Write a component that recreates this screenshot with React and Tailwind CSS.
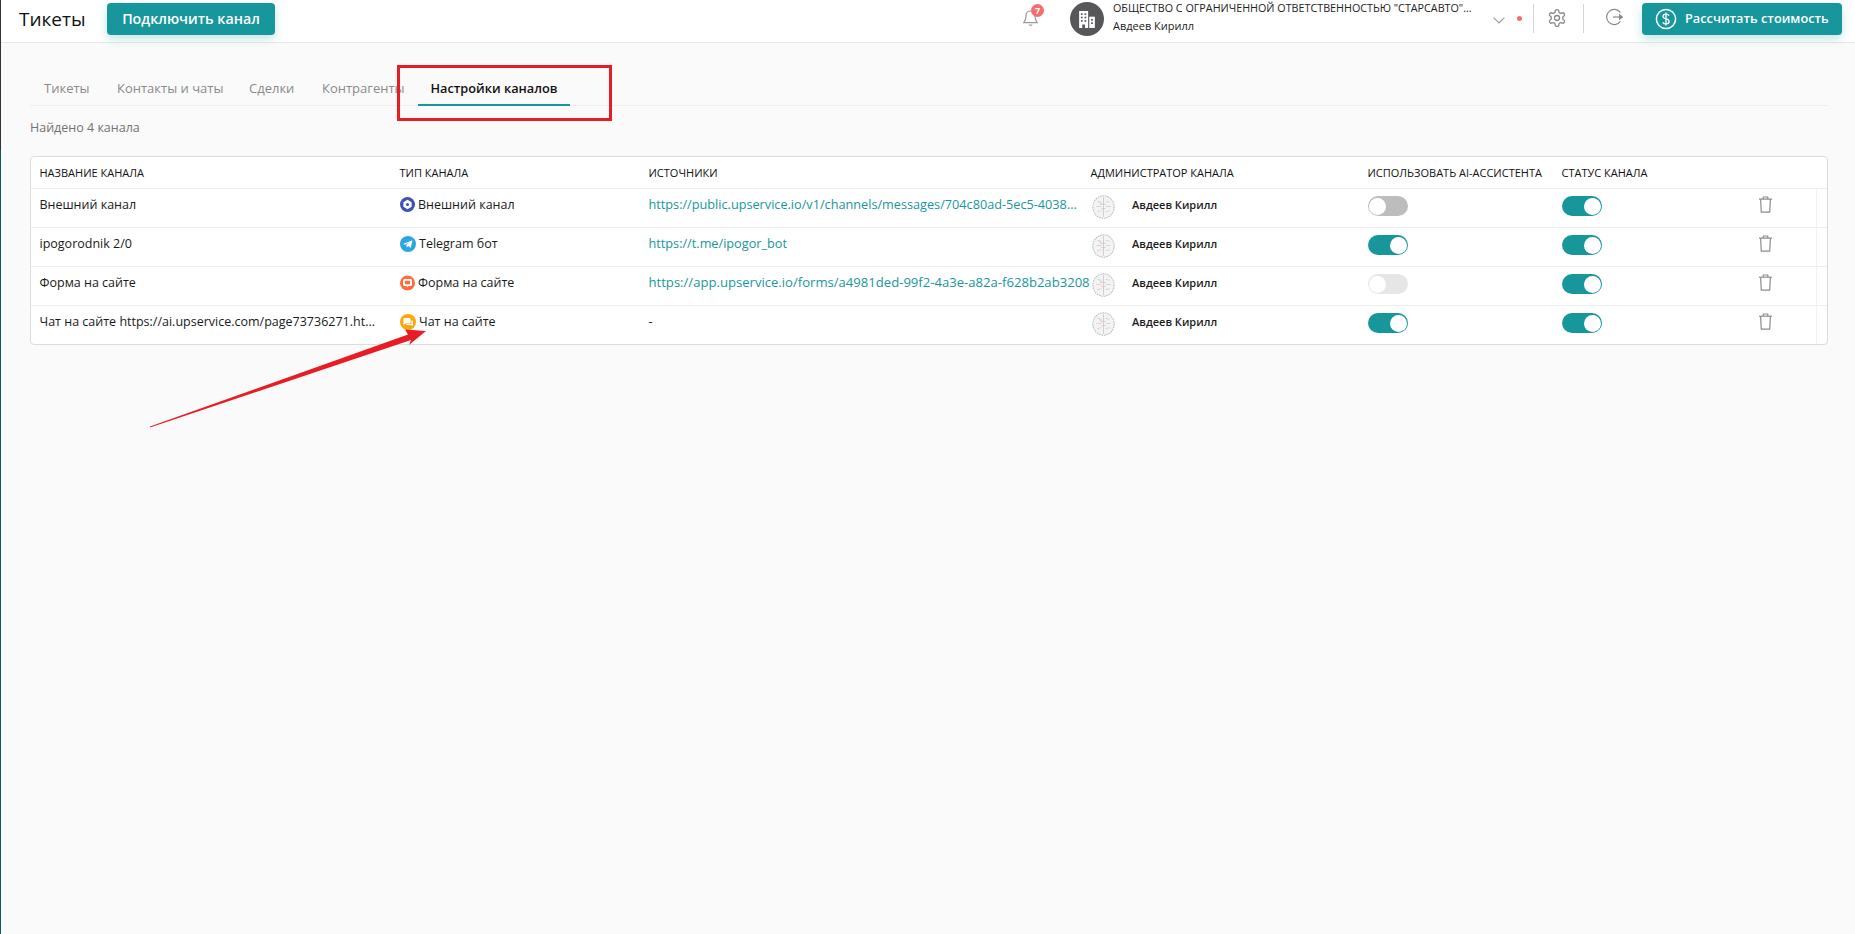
const rows = [
  { name: 'Внешний канал', type: 'Внешний канал', icon: 'ext', src: 'https://public.upservice.io/v1/channels/messages/704c80ad-5ec5-4038...', srcSize: 'text-[12.7px]', ai: 'off' },
  { name: 'ipogorodnik 2/0', type: 'Telegram бот', icon: 'tg', src: 'https://t.me/ipogor_bot', srcSize: 'text-[12.7px]', ai: 'on' },
  { name: 'Форма на сайте', type: 'Форма на сайте', icon: 'form', src: 'https://app.upservice.io/forms/a4981ded-99f2-4a3e-a82a-f628b2ab3208', srcSize: 'text-[13.1px]', ai: 'disabled' },
  { name: 'Чат на сайте https://ai.upservice.com/page73736271.ht...', type: 'Чат на сайте', icon: 'chat', src: '-', srcSize: 'text-[12.7px]', ai: 'on' },
];

const grid = 'grid grid-cols-[360px_249px_442px_277px_194px_1fr]';

function TypeIcon({ kind }) {
  if (kind === 'ext') return (
    <svg width="15" height="15" viewBox="0 0 16 16" className="shrink-0">
      <circle cx="8" cy="8" r="8" fill="#3f51b5" />
      <path d="M8 3l4.4 2.5v5L8 13l-4.4-2.5v-5z" fill="#fff" />
      <circle cx="8" cy="8" r="1.6" fill="#3f51b5" />
    </svg>
  );
  if (kind === 'tg') return (
    <svg width="16" height="16" viewBox="0 0 16 16" className="shrink-0">
      <circle cx="8" cy="8" r="8" fill="#2ca5e0" />
      <path d="M3 7.9l9.4-3.7-1.6 7.9-2.7-2-1.4 1.4-.3-2.4 4.2-3.6-5.3 3.2z" fill="#fff" />
    </svg>
  );
  if (kind === 'form') return (
    <svg width="15" height="16" viewBox="0 0 16 16" className="shrink-0">
      <circle cx="8" cy="8" r="8" fill="#ff6b3d" />
      <rect x="3.2" y="3.8" width="9.6" height="7.4" rx="1.6" fill="#fff" />
      <rect x="5.2" y="5.6" width="5.6" height="3.6" rx="0.8" fill="#ff6b3d" />
      <path d="M6.5 11h3l-1.5 1.6z" fill="#fff" />
    </svg>
  );
  return (
    <svg width="16" height="16" viewBox="0 0 16 16" className="shrink-0">
      <circle cx="8" cy="8" r="8" fill="#ffa50a" />
      <path d="M3.4 5a1 1 0 011-1h5.2a1 1 0 011 1v3.4a1 1 0 01-1 1H5.6L3.4 11z" fill="#fff" />
      <path d="M11.4 6.4h.6a.9.9 0 01.9.9v5l-1.8-1.4H6.5v-.8h3.4a1.5 1.5 0 001.5-1.5z" fill="#fff" />
    </svg>
  );
}

function Toggle({ state }) {
  const on = state === 'on';
  const track = on ? 'bg-[#17979c] justify-end' : state === 'off' ? 'bg-[#bdbdbd] justify-start' : 'bg-[#e6e6e6] justify-start';
  return (
    <div className={`flex h-5 w-10 items-center rounded-full px-[1px] ${track}`}>
      <div className="h-[17px] w-[17px] rounded-full bg-white" />
    </div>
  );
}

function BrainAvatar() {
  return (
    <svg width="23" height="24" viewBox="0 0 22 23" className="shrink-0">
      <ellipse cx="11" cy="11.5" rx="10.2" ry="10.8" fill="#f4f4f4" stroke="#bcbcbc" strokeWidth="1" strokeDasharray="1.6 0.8" />
      <path d="M11 2v19" stroke="#c9c9c9" strokeWidth="0.8" />
      <path d="M5 6l4 1M4 11h5M5 16l4-1M13 6l4 1M13 11h5M13 16l4-1" stroke="#cfcfcf" strokeWidth="0.8" />
      <path d="M8 9h5M9 13h4" stroke="#f0b8b8" strokeWidth="0.8" />
      <path d="M7 7.5l2 .5" stroke="#a9cde6" strokeWidth="0.8" />
    </svg>
  );
}

function Trash() {
  return (
    <svg width="15" height="17" viewBox="0 0 15 17" fill="none" stroke="#8c8c8c" strokeWidth="1.2" strokeLinejoin="round">
      <path d="M1 3.2h13" />
      <path d="M5.2 3V1h4.6v2" />
      <path d="M2.6 3.4l.7 12.8h8.4l.7-12.8" />
    </svg>
  );
}

export default function App() {
  return (
    <div className="relative flex h-[934px] w-[1855px] overflow-hidden bg-[#fafafa] font-['Open_Sans',sans-serif] text-[12.5px] text-[#1a1a1a]">
      <div className="w-px shrink-0 bg-[linear-gradient(#333_0,#333_150px,#0d5c5e_150px,#0d5c5e_100%)]" />
      <div className="min-w-0 flex-1">
        <header className="flex h-[43px] items-start border-b border-[#e8e8e8] bg-white pt-[3px]">
          <div className="ml-[18px] w-[88px] pt-[2px] text-[19px] font-medium leading-[28px] text-[#111]">Тикеты</div>
          <button className="flex h-8 w-[168px] items-center justify-center rounded bg-[#17979c] text-[14.25px] font-semibold text-white shadow-[0_4px_10px_rgba(23,151,156,0.25)]">Подключить канал</button>

          <div className="relative ml-[747px] mt-[6px] w-[48px]">
            <svg width="15" height="18" viewBox="0 0 15 18" fill="none" stroke="#9a9a9a" strokeWidth="1.2" className="ml-[1px]">
              <path d="M7.5 2a4.4 4.4 0 00-4.4 4.4c0 4.6-1.6 6.4-2.3 7.2h13.4c-.7-.8-2.3-2.6-2.3-7.2A4.4 4.4 0 007.5 2z" />
              <path d="M6 15.4a1.6 1.6 0 003 0" />
            </svg>
            <span className="absolute left-[9px] top-[-5px] flex h-[13px] w-[13px] items-center justify-center rounded-full bg-[#f76c6c] text-[9px] font-bold leading-none text-white">7</span>
          </div>

          <div className="mt-[-1px] flex h-[34px] w-[34px] shrink-0 items-center justify-center rounded-full bg-[#57575a]">
            <svg width="18" height="17" viewBox="0 0 16 15" fill="#fff">
              <path d="M1 0h8v15H6.2v-3H3.8v3H1z" />
              <path d="M10 5h5v10h-5z" />
              <g fill="#57575a">
                <rect x="2.6" y="2" width="1.5" height="1.5" /><rect x="5.8" y="2" width="1.5" height="1.5" />
                <rect x="2.6" y="5" width="1.5" height="1.5" /><rect x="5.8" y="5" width="1.5" height="1.5" />
                <rect x="2.6" y="8" width="1.5" height="1.5" /><rect x="5.8" y="8" width="1.5" height="1.5" />
                <rect x="11.6" y="7" width="1.6" height="1.5" /><rect x="11.6" y="10" width="1.6" height="1.5" />
              </g>
            </svg>
          </div>

          <div className="ml-[9px] w-[379px] text-[#222]">
            <div className="mt-[-3px] text-[10.75px] leading-[16px] whitespace-nowrap">ОБЩЕСТВО С ОГРАНИЧЕННОЙ ОТВЕТСТВЕННОСТЬЮ "СТАРСАВТО"...</div>
            <div className="mt-[2px] text-[11px] leading-[16px]">Авдеев Кирилл</div>
          </div>

          <svg width="12" height="7" viewBox="0 0 12 7" fill="none" stroke="#9a9a9a" strokeWidth="1.1" className="ml-[1px] mt-[14px]">
            <path d="M.6.6L6 6l5.4-5.4" />
          </svg>
          <span className="ml-[12px] mt-[13px] h-[5px] w-[5px] rounded-full bg-[#f76c6c]" />
          <span className="ml-[11px] mt-[1px] h-[29px] w-px bg-[#d5d5d5]" />

          <svg width="20" height="20" viewBox="0 0 24 24" fill="none" stroke="#8a8a8a" strokeWidth="1.6" strokeLinecap="round" strokeLinejoin="round" className="ml-[13px] mt-[5px]">
            <path d="M12.22 2h-.44a2 2 0 0 0-2 2v.18a2 2 0 0 1-1 1.73l-.43.25a2 2 0 0 1-2 0l-.15-.08a2 2 0 0 0-2.73.73l-.22.38a2 2 0 0 0 .73 2.73l.15.1a2 2 0 0 1 1 1.72v.51a2 2 0 0 1-1 1.74l-.15.09a2 2 0 0 0-.73 2.73l.22.38a2 2 0 0 0 2.73.73l.15-.08a2 2 0 0 1 2 0l.43.25a2 2 0 0 1 1 1.73V20a2 2 0 0 0 2 2h.44a2 2 0 0 0 2-2v-.18a2 2 0 0 1 1-1.73l.43-.25a2 2 0 0 1 2 0l.15.08a2 2 0 0 0 2.73-.73l.22-.39a2 2 0 0 0-.73-2.73l-.15-.08a2 2 0 0 1-1-1.74v-.5a2 2 0 0 1 1-1.74l.15-.09a2 2 0 0 0 .73-2.73l-.22-.38a2 2 0 0 0-2.73-.73l-.15.08a2 2 0 0 1-2 0l-.43-.25a2 2 0 0 1-1-1.73V4a2 2 0 0 0-2-2z" />
            <circle cx="12" cy="12" r="3" />
          </svg>
          <span className="ml-[16px] mt-[1px] h-[29px] w-px bg-[#d5d5d5]" />

          <svg width="18" height="18" viewBox="0 0 18 18" fill="none" stroke="#8a8a8a" strokeWidth="1.2" className="ml-[21px] mt-[5px]">
            <path d="M15.4 4.6A7.6 7.6 0 1 0 15.4 13.4" />
            <path d="M8 9h9.2" />
            <path d="M14.6 7l2.6 2-2.6 2z" fill="#8a8a8a" />
          </svg>

          <button className="ml-[19px] flex h-8 w-[200px] items-center whitespace-nowrap rounded bg-[#17979c] pl-[13px] text-[12.75px] font-semibold text-white shadow-[0_4px_10px_rgba(23,151,156,0.25)]">
            <svg width="22" height="22" viewBox="0 0 22 22" fill="none" stroke="#fff" strokeWidth="1.5" className="mr-[8px] shrink-0">
              <circle cx="11" cy="11" r="9.6" />
              <path d="M14 7.6c-.6-1-1.7-1.5-3-1.5-1.7 0-3 .9-3 2.4 0 3.2 6.2 1.7 6.2 5 0 1.5-1.4 2.4-3.2 2.4-1.4 0-2.6-.6-3.2-1.6M11 4.4v13.2" strokeWidth="1.3" />
            </svg>
            Рассчитать стоимость
          </button>
        </header>

        <main className="pl-[29px] pr-[27px]">
          <nav className="mt-[30px] flex h-[33px] items-start border-b border-[#eeeeee] pt-[6px] text-[13px] text-[#8a8a8a]">
            <div className="ml-[14px] w-[73px]">Тикеты</div>
            <div className="w-[132px]">Контакты и чаты</div>
            <div className="w-[73px]">Сделки</div>
            <div className="w-[96px]">Контрагенты</div>
            <div className="flex h-[27px] w-[152px] justify-center border-b-2 border-[#17979c] text-[12.75px] font-semibold text-[#111]">Настройки каналов</div>
          </nav>

          <div className="mt-[13px] text-[12.5px] leading-[18px] text-[#737373]">Найдено 4 канала</div>

          <div className="mt-[19px] overflow-hidden rounded border border-[#dcdcdc] bg-white">
            <div className={`${grid} h-[32px] items-center border-b border-[#eeeeee] pb-[1px] text-[11px] font-medium leading-none text-[#111]`}>
              {['НАЗВАНИЕ КАНАЛА', 'ТИП КАНАЛА', 'ИСТОЧНИКИ', 'АДМИНИСТРАТОР КАНАЛА', 'ИСПОЛЬЗОВАТЬ AI-АССИСТЕНТА', 'СТАТУС КАНАЛА'].map((h) => (
                <div key={h} className="whitespace-nowrap pl-[8.5px]">{h}</div>
              ))}
            </div>
            {rows.map((r, i) => (
              <div key={r.icon} className={`${grid} ${i < 3 ? 'h-[39px] border-b border-[#eeeeee]' : 'h-[38px]'}`}>
                <div className="whitespace-nowrap pl-[8.5px] pt-[6px] leading-[20px]">{r.name}</div>
                <div className="flex items-start gap-[3px] pl-[9px] pt-[6px] leading-[20px]">
                  <span className="mt-[2px]"><TypeIcon kind={r.icon} /></span>
                  <span>{r.type}</span>
                </div>
                <div className={`whitespace-nowrap pl-[8.5px] pt-[5px] leading-[20px] ${r.srcSize} ${r.src === '-' ? '' : 'text-[#17979c]'}`}>{r.src}</div>
                <div className="flex items-start pl-[2px] pt-[6px]">
                  <span className="ml-[8px]"><BrainAvatar /></span>
                  <span className="ml-[17px] mt-[2px] text-[11px] font-semibold leading-[16px]">Авдеев Кирилл</span>
                </div>
                <div className="pl-[9px] pt-[7px]"><Toggle state={r.ai} /></div>
                <div className="flex items-start justify-between pl-[9px] pt-[7px]">
                  <Toggle state="on" />
                  <div className="mr-[10px] mt-[-7px] flex h-[39px] w-[60px] items-start border-r border-[#f2f2f2] pt-[7px]">
                    <span className="mr-[43px] ml-auto"><Trash /></span>
                  </div>
                </div>
              </div>
            ))}
          </div>
        </main>
      </div>

      <div className="absolute left-[397px] top-[65px] h-[56px] w-[215px] border-[3px] border-[#e81c24]" />
      <svg className="absolute left-0 top-0" width="1855" height="934" viewBox="0 0 1855 934" fill="none">
        <path d="M150 427.5L411 340l-2 5L426 331l-21-1.5 3 5L150 426.5z" fill="#e81c24" />
      </svg>
    </div>
  );
}
